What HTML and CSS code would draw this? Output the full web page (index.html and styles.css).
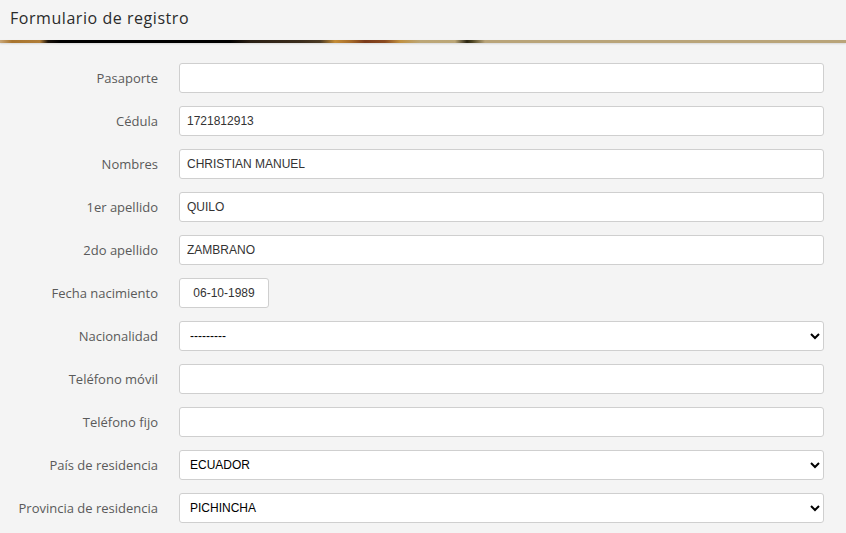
FILE: index.html
```html
<!DOCTYPE html>
<html lang="es">
<head>
<meta charset="utf-8">
<title>Formulario de registro</title>
<link rel="stylesheet" href="styles.css">
</head>
<body>
<header class="header">
  <h1 class="title">Formulario de registro</h1>
</header>
<div class="stripe"></div>
<form class="form">
  <label class="label" for="pasaporte">Pasaporte</label>
  <input class="field" id="pasaporte" type="text" value="">

  <label class="label" for="cedula">Cédula</label>
  <input class="field" id="cedula" type="text" value="1721812913">

  <label class="label" for="nombres">Nombres</label>
  <input class="field" id="nombres" type="text" value="CHRISTIAN MANUEL">

  <label class="label" for="ap1">1er apellido</label>
  <input class="field" id="ap1" type="text" value="QUILO">

  <label class="label" for="ap2">2do apellido</label>
  <input class="field" id="ap2" type="text" value="ZAMBRANO">

  <label class="label" for="fecha">Fecha nacimiento</label>
  <div class="cell"><input class="field date" id="fecha" type="text" value="06-10-1989"></div>

  <label class="label" for="nac">Nacionalidad</label>
  <select class="field select" id="nac"><option>---------</option></select>

  <label class="label" for="movil">Teléfono móvil</label>
  <input class="field" id="movil" type="text" value="">

  <label class="label" for="fijo">Teléfono fijo</label>
  <input class="field" id="fijo" type="text" value="">

  <label class="label" for="pais">País de residencia</label>
  <select class="field select" id="pais"><option>ECUADOR</option></select>

  <label class="label" for="prov">Provincia de residencia</label>
  <select class="field select" id="prov"><option>PICHINCHA</option></select>
</form>
</body>
</html>
```

FILE: styles.css
```css
* { box-sizing: border-box; }
html, body {
  margin: 0;
  padding: 0;
  background: #f4f4f4;
  overflow: hidden;
}
.header {
  height: 40px;
  padding: 0 10px;
  display: flex;
  align-items: center;
}
.title {
  margin: 0;
  font-family: "Open Sans", sans-serif;
  font-weight: 500;
  font-size: 16px;
  color: #2b2b2b;
  letter-spacing: 0.55px;
  position: relative;
  top: -2px;
}
.stripe {
  height: 3px;
  background: linear-gradient(to right,
    #c9a676 0px, #a8742e 12px, #b07d38 40px, #1a120a 48px, #000 60px,
    #000 230px, #2a1f14 250px, #3a2c1c 300px, #4b3a24 320px,
    #c48c36 335px, #a86d2a 350px, #7a3a1a 365px, #8a4a20 385px,
    #c09040 400px, #bca676 420px, #bba677 455px, #2a2512 467px,
    #4a4220 472px, #b9a479 485px, #b9a479 100%);
  box-shadow: 0 1px 2px rgba(0,0,0,0.12);
}
.form {
  display: grid;
  grid-template-columns: 158px 1fr;
  column-gap: 21px;
  row-gap: 13px;
  padding: 20px 22px 0 0;
}
.label {
  text-align: right;
  font-family: "Open Sans", sans-serif;
  font-size: 13px;
  color: #5a5a5a;
  height: 30px;
  line-height: 30px;
  white-space: nowrap;
}
.cell { display: flex; }
.field {
  height: 30px;
  width: 100%;
  border: 1px solid #cfcfcf;
  border-radius: 3px;
  background: #fff;
  padding: 0 7px;
  font-family: "Liberation Sans", Arial, sans-serif;
  font-size: 12px;
  color: #333;
  outline: none;
}
.date {
  width: 90px;
  text-align: center;
  padding: 0;
}
.select {
  color: #000;
  padding: 0 6px;
}
```
